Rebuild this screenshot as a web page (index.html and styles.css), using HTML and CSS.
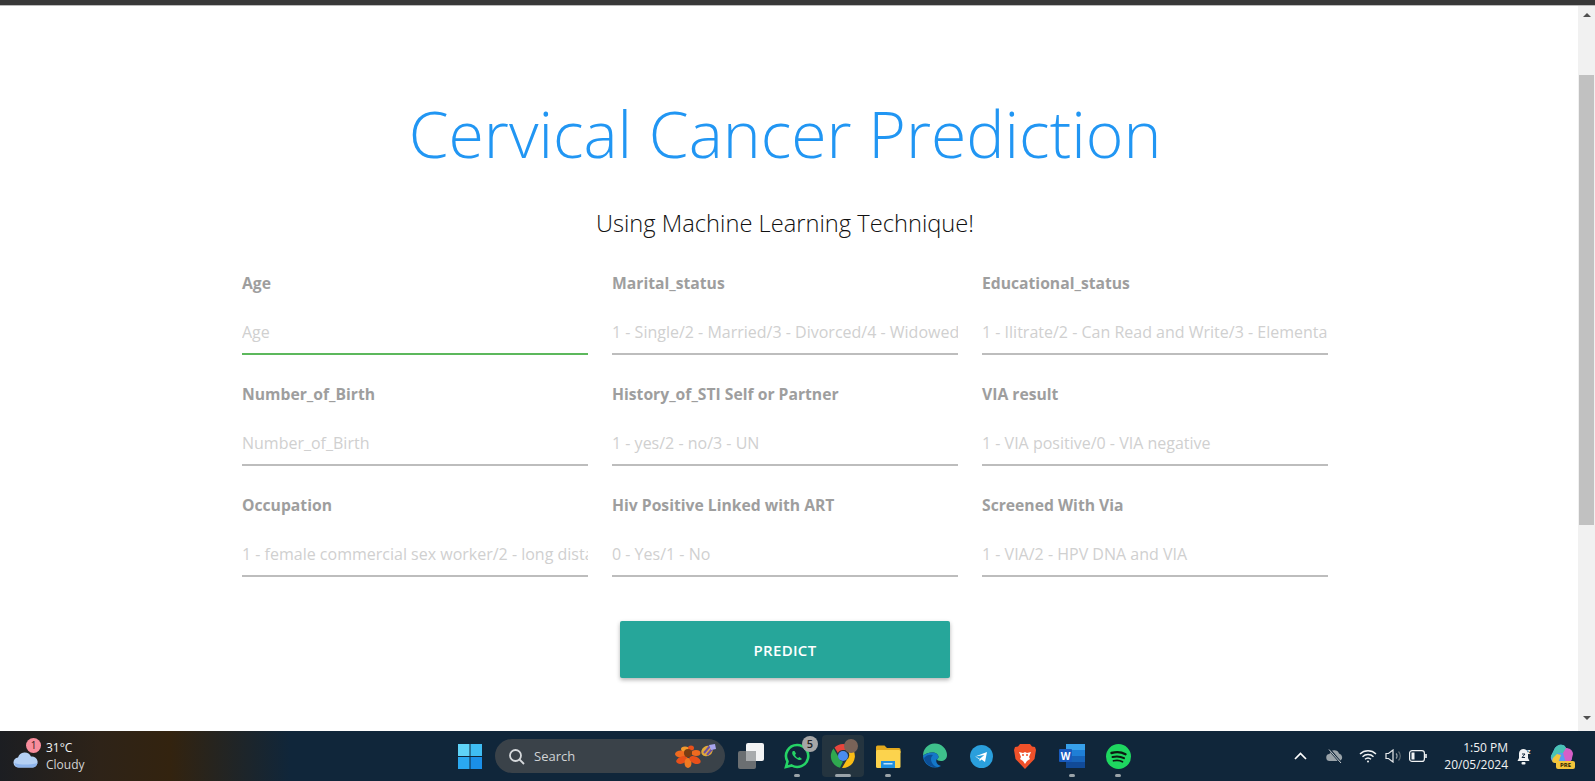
FILE: index.html
```html
<!DOCTYPE html>
<html lang="en">
<head>
  <meta charset="UTF-8">
  <meta name="viewport" content="width=device-width, initial-scale=1.0">
  <title>Cervical Cancer Prediction</title>
  <link rel="stylesheet" href="styles.css">
</head>
<body>
  <div class="topbar"></div>

  <div class="window">
    <main class="page">
      <h1>Cervical Cancer Prediction</h1>
      <h2>Using Machine Learning Technique!</h2>

      <form class="form-grid">
        <div class="field">
          <label for="age">Age</label>
          <input id="age" class="active" type="text" placeholder="Age">
        </div>
        <div class="field">
          <label for="marital">Marital_status</label>
          <input id="marital" type="text" placeholder="1 - Single/2 - Married/3 - Divorced/4 - Widowed">
        </div>
        <div class="field">
          <label for="education">Educational_status</label>
          <input id="education" type="text" placeholder="1 - Ilitrate/2 - Can Read and Write/3 - Elementary">
        </div>
        <div class="field">
          <label for="births">Number_of_Birth</label>
          <input id="births" type="text" placeholder="Number_of_Birth">
        </div>
        <div class="field">
          <label for="sti">History_of_STI Self or Partner</label>
          <input id="sti" type="text" placeholder="1 - yes/2 - no/3 - UN">
        </div>
        <div class="field">
          <label for="via">VIA result</label>
          <input id="via" type="text" placeholder="1 - VIA positive/0 - VIA negative">
        </div>
        <div class="field">
          <label for="occupation">Occupation</label>
          <input id="occupation" type="text" placeholder="1 - female commercial sex worker/2 - long distance driver">
        </div>
        <div class="field">
          <label for="hiv">Hiv Positive Linked with ART</label>
          <input id="hiv" type="text" placeholder="0 - Yes/1 - No">
        </div>
        <div class="field">
          <label for="screened">Screened With Via</label>
          <input id="screened" type="text" placeholder="1 - VIA/2 - HPV DNA and VIA">
        </div>
        <button class="predict" type="button">PREDICT</button>
      </form>
    </main>

    <div class="scrollbar">
      <span class="arrow arrow-up"></span>
      <span class="thumb"></span>
      <span class="arrow arrow-down"></span>
    </div>
  </div>

  <footer class="taskbar">
    <div class="weather">
      <span class="weather-icon">
        <svg width="26" height="18" viewBox="0 0 26 18"><path d="M6 17.500a5 5 0 0 1-1-10 7 7 0 0 1 13-1 5.500 5.500 0 0 1 2 11z" fill="#b4d0f4"/><path d="M1.500 13c6 2 15 2 23 0-.5 2.500-2.500 4.500-5 4.500H6c-2.500 0-4-2-4.500-4.500z" fill="#8db4ec"/></svg>
        <span class="weather-badge">1</span>
      </span>
      <div class="weather-text">
        <div>31°C</div>
        <div class="weather-sub">Cloudy</div>
      </div>
    </div>

    <div class="tasks">
      <svg class="start" width="24" height="25" viewBox="0 0 24 25">
        <rect width="11.500" height="12" fill="#5fd3f7"/><rect x="12.500" width="11.500" height="12" fill="#3fbdf3"/>
        <rect y="13" width="11.500" height="12" fill="#2aa8f0"/><rect x="12.500" y="13" width="11.500" height="12" fill="#1a8fe8"/>
      </svg>

      <div class="search">
        <svg width="17" height="17" viewBox="0 0 17 17" fill="none" stroke="#d6d9dc" stroke-width="1.800"><circle cx="7.500" cy="7.500" r="5.500"/><path d="M11.500 11.500l4.500 4.500"/></svg>
        <span class="search-label">Search</span>
        <svg class="search-art" width="42" height="24" viewBox="0 0 42 24">
          <ellipse cx="6" cy="10" rx="6" ry="3.500" fill="#ef6a1f"/>
          <ellipse cx="7" cy="16" rx="6" ry="3.500" fill="#e8501a" transform="rotate(-20 7 16)"/>
          <ellipse cx="13" cy="19" rx="3.500" ry="5" fill="#f07a22"/>
          <ellipse cx="20" cy="16" rx="6" ry="3.500" fill="#e8501a" transform="rotate(25 20 16)"/>
          <ellipse cx="21" cy="9" rx="4.500" ry="3" fill="#ef6a1f"/>
          <ellipse cx="10" cy="5" rx="4" ry="2.500" fill="#f39a2c"/>
          <ellipse cx="16" cy="4" rx="3" ry="2.500" fill="#e8501a"/>
          <circle cx="13" cy="9" r="4" fill="#7a3d12"/>
          <ellipse cx="32" cy="7" rx="6" ry="5" fill="#e0a93a" transform="rotate(-35 32 7)"/>
          <path d="M29 9l6-7M32 11l6-7" stroke="#6a4fa8" stroke-width="2"/>
          <path d="M34 1l6-1 1 5-5 1z" fill="#a8a4ec"/>
        </svg>
      </div>

      <svg class="taskview" width="26" height="26" viewBox="0 0 26 26">
        <rect y="8" width="18" height="18" rx="2" fill="#6b6f72"/>
        <rect x="8" width="18" height="18" rx="2" fill="#f2f3f4"/>
        <rect x="8" y="8" width="10" height="10" fill="#a8abad"/>
      </svg>

      <div class="app app-whatsapp">
        <svg width="26" height="26" viewBox="0 0 26 26"><path d="M13 2a11 11 0 0 0-9.500 16.500L2 24l5.700-1.500A11 11 0 1 0 13 2z" fill="none" stroke="#25d366" stroke-width="2.600"/><path d="M9 8c-2 2 0 5 2.500 7s5 3 6.500 1l-2.500-2-1.500 1c-1.500-.500-2.500-2-3-3l1-1.500L10.500 8z" fill="#25d366"/></svg>
        <span class="count">5</span>
        <i class="dot"></i>
      </div>

      <div class="app app-chrome">
        <svg width="26" height="26" viewBox="0 0 26 26">
          <path d="M13 1a12 12 0 0 1 10.400 6H13a6 6 0 0 0-5.200 3L4.500 4.500A12 12 0 0 1 13 1z" fill="#e8453c"/>
          <path d="M3.500 5.500L8.500 14a5.500 5.500 0 0 0 4.500 4.500L10 24.700A12 12 0 0 1 3.500 5.500z" fill="#2fa84f"/>
          <path d="M23.800 8A12 12 0 0 1 12 25l5-8.500a5.500 5.500 0 0 0 .500-8.500z" fill="#f9bc15"/>
          <circle cx="13" cy="13" r="5" fill="#4a8cf0"/>
        </svg>
        <span class="chrome-avatar"></span>
        <i class="dot dot-wide"></i>
      </div>

      <div class="app app-files">
        <svg width="26" height="23" viewBox="0 0 26 23"><path d="M1 2a1.500 1.500 0 0 1 1.500-1.500h7L12 3h12a1.500 1.500 0 0 1 1.500 1.500V8H1z" fill="#e3a91d"/><rect x="1" y="5" width="24.500" height="18" rx="1.500" fill="#fcd34d"/><rect x="6" y="16" width="14" height="7" fill="#1f8ee0"/><rect x="8.500" y="18" width="9" height="1.500" fill="#bfe3fb"/></svg>
        <i class="dot"></i>
      </div>

      <div class="app app-edge">
        <svg width="26" height="26" viewBox="0 0 26 26">
          <path d="M1 13A12 12 0 0 1 25 12c0 4-3 6-6 6-3 0-4-1-4-2 2-1 2-3 0-5-4-3-11-1-14 2z" fill="#3ec08c"/>
          <path d="M1 13c3-3 10-5 14-2 2 2 2 4 0 5-2 2 0 6 4 7A12 12 0 0 1 1 13z" fill="#1478c8"/>
          <path d="M9 16c0 3 2 7 6 8-6 1-12-3-13-9 2-3 6-4 9-3-1 1-2 2-2 4z" fill="#0c4f96"/>
        </svg>
      </div>

      <div class="app app-telegram">
        <svg width="23" height="23" viewBox="0 0 23 23"><circle cx="11.500" cy="11.500" r="11.500" fill="#2a9fdc"/><path d="M5 11.500l12-4.500-2 10-3.500-2.500-1.800 1.800-.4-3zl4.300 2.800 5-4.300" fill="#fff"/></svg>
      </div>

      <div class="app app-brave">
        <svg width="22" height="25" viewBox="0 0 22 25"><path d="M6 0h10l2 2.500 3 .500 1 3-1.500 9L11 25 1.500 15 0 6l1-3 3-.500z" fill="#f0512a"/><path d="M5 8l4 1 2-1 2 1 4-1-2 5 1 2-3 2-2 3-2-3-3-2 1-2z" fill="#fff"/><path d="M8 11h2M12 11h2" stroke="#f0512a" stroke-width="1.500"/></svg>
      </div>

      <div class="app app-word">
        <svg width="26" height="24" viewBox="0 0 26 24">
          <rect x="7" width="19" height="6.500" fill="#37a0ea"/><rect x="7" y="6" width="19" height="6" fill="#1f7fd6"/><rect x="7" y="12" width="19" height="6" fill="#1763b8"/><rect x="7" y="18" width="19" height="6" fill="#114a97"/>
          <rect y="5" width="13" height="13" rx="1" fill="#185abd"/>
          <text x="6.500" y="15.500" class="word-letter">W</text>
        </svg>
        <i class="dot"></i>
      </div>

      <div class="app app-spotify">
        <svg width="25" height="25" viewBox="0 0 25 25" fill="none" stroke="#0d1a12" stroke-linecap="round"><circle cx="12.500" cy="12.500" r="12.500" fill="#1ed760" stroke="none"/><path d="M5.500 9c5-1.500 10-1 14 1.200" stroke-width="2.400"/><path d="M6.500 13c4-1 8-.700 11.500 1.200" stroke-width="2"/><path d="M7.500 16.800c3.200-.800 6.500-.500 9 1" stroke-width="1.700"/></svg>
        <i class="dot"></i>
      </div>
    </div>

    <div class="tray">
      <svg class="tray-chevron" width="13" height="8" viewBox="0 0 13 8" fill="none" stroke="#fff" stroke-width="1.700"><path d="M1 7l5.500-5.500L12 7"/></svg>
      <svg class="tray-cloud" width="18" height="14" viewBox="0 0 18 14"><path d="M4 12a3.500 3.500 0 0 1-.500-7 5 5 0 0 1 9.500-.500A4 4 0 0 1 14 12z" fill="#9aa3a9"/><path d="M3 0l12 14" stroke="#10263a" stroke-width="2.500"/><path d="M3 .500l12 13.500" stroke="#c9ced1" stroke-width="1"/></svg>
      <svg class="tray-wifi" width="18" height="14" viewBox="0 0 18 14" fill="none" stroke="#f1f3f4" stroke-width="1.400"><path d="M1 5a11.500 11.500 0 0 1 16 0M3.500 7.700a8 8 0 0 1 11 0M6 10.300a4.500 4.500 0 0 1 6 0"/><circle cx="9" cy="12.500" r="1" fill="#f1f3f4" stroke="none"/></svg>
      <svg class="tray-volume" width="18" height="14" viewBox="0 0 18 14" fill="none" stroke="#e6e8ea" stroke-width="1.200"><path d="M1 4.500h2.500L8 1v12L3.500 9.500H1z"/><path d="M11 4.500a3.500 3.500 0 0 1 0 5" stroke="#9aa3a9"/><path d="M13.500 2.500a6.500 6.500 0 0 1 0 9" stroke="#5e6a72"/></svg>
      <svg class="tray-battery" width="18" height="12" viewBox="0 0 18 12" fill="none" stroke="#f1f3f4" stroke-width="1.200"><rect x=".600" y=".600" width="14.800" height="10.800" rx="2.500"/><rect x="2.500" y="2.500" width="3" height="7" fill="#f1f3f4" stroke="none"/><path d="M17 4v4" stroke-width="1.600"/></svg>
      <div class="clock">
        <div>1:50 PM</div>
        <div>20/05/2024</div>
      </div>
      <svg class="tray-bell" width="15" height="17" viewBox="0 0 15 17"><path d="M6.500 1a4.500 4.500 0 0 0-4.500 4.500V10L.500 13h12L11 10V5.500A4.500 4.500 0 0 0 6.500 1z" fill="#f1f3f4"/><rect x="4.500" y="14" width="4" height="2.500" rx="1" fill="#f1f3f4"/><path d="M5 6h3L5 9.500h3" stroke="#10263a" fill="none"/><text x="10" y="6" class="bell-z">z</text></svg>
      <div class="copilot">
        <svg width="25" height="20" viewBox="0 0 25 20"><path d="M9 1c3-1 6 0 7 3l5 8c2 4-1 7-5 7H7c-4 0-7-3-6-7l3-6c1-3 3-4 5-5z" fill="#5a9df0"/><path d="M9 1c3-1 6 0 7 3l2 5H8L5 14c-2 1-4 0-4-2l3-6c1-3 3-4 5-5z" fill="#49c2b4"/><path d="M16 4c3 0 7 2 7 6l-1 4c0 3-3 5-6 5l-3-10z" fill="#d65fc8"/><path d="M4 13l3-3 4 1-3 8H5c-3 0-4-3-1-6z" fill="#f3c53b"/></svg>
        <span class="copilot-tag">PRE</span>
      </div>
    </div>
  </footer>
</body>
</html>
```
FILE: styles.css
```css
html, body {
  margin: 0;
  height: 100%;
  overflow: hidden;
}
body {
  display: flex;
  flex-direction: column;
  height: 781px;
  font-family: "Open Sans", sans-serif;
  background-color: #fff;
}
.topbar {
  height: 5px;
  background-color: #383838;
  border-bottom: 1px solid #bbb;
  flex: none;
}
.window {
  display: flex;
  flex: 1;
  min-height: 0;
}
.page {
  flex: 1;
  padding: 87px 0 0 242px;
}
h1 {
  width: 1086px;
  margin: 0;
  font-size: 64.300px;
  font-weight: 300;
  line-height: 80px;
  text-align: center;
  color: #2196f3;
}
h2 {
  width: 1086px;
  margin: 34px 0 33px;
  font-size: 23.700px;
  font-weight: 300;
  line-height: 32px;
  text-align: center;
  color: #111;
}
.form-grid {
  display: grid;
  grid-template-columns: repeat(3, 346px);
  column-gap: 24px;
  row-gap: 28px;
  width: 1086px;
}
.field label {
  display: block;
  height: 22px;
  margin-bottom: 16px;
  font-size: 15.700px;
  font-weight: 700;
  line-height: 22px;
  color: #9e9e9e;
}
.field input {
  display: block;
  box-sizing: border-box;
  width: 100%;
  height: 45px;
  padding: 0;
  border: 0;
  border-bottom: 2px solid #bdbdbd;
  outline: none;
  font-family: inherit;
  font-size: 16px;
  background: transparent;
}
.field input::placeholder {
  color: #d0d0d0;
}
.field input.active {
  border-bottom-color: #5cb85c;
}
.predict {
  grid-column: 1 / -1;
  justify-self: center;
  width: 330px;
  height: 57px;
  margin-top: 16px;
  border: 0;
  border-radius: 2px;
  font-family: inherit;
  font-size: 15px;
  font-weight: 600;
  letter-spacing: .3px;
  color: #fff;
  background-color: #26a69a;
  box-shadow: 0 2px 4px rgba(0,0,0,.3);
}
.scrollbar {
  display: flex;
  flex-direction: column;
  align-items: center;
  flex: none;
  width: 17px;
  background-color: #f1f1f1;
}
.arrow {
  width: 0;
  height: 0;
  border-left: 4px solid transparent;
  border-right: 4px solid transparent;
}
.arrow-up {
  margin-top: 7px;
  border-bottom: 4px solid #505050;
}
.arrow-down {
  margin-top: 191px;
  border-top: 4px solid #505050;
}
.thumb {
  width: 15px;
  height: 450px;
  margin-top: 58px;
  background-color: #c1c1c1;
}

/* taskbar */
.taskbar {
  display: flex;
  align-items: center;
  flex: none;
  height: 50px;
  color: #f1f3f4;
  background: linear-gradient(90deg, #1c1e22 0, #2e2318 100px, #33230f 170px, #10263a 290px, #10263a 100%);
}
.weather {
  display: flex;
  align-items: center;
  width: 458px;
  padding-left: 13px;
  box-sizing: border-box;
  flex: none;
}
.weather-icon {
  position: relative;
  display: block;
  width: 26px;
  height: 18px;
  margin-top: 6px;
}
.weather-badge {
  position: absolute;
  top: -12px;
  left: 13px;
  width: 15px;
  height: 15px;
  border-radius: 50%;
  font-size: 10px;
  line-height: 15px;
  text-align: center;
  color: #3a1c22;
  background-color: #f98d9c;
}
.weather-text {
  margin-left: 7px;
  font-size: 12px;
  line-height: 17px;
}
.weather-sub {
  color: #d4d4d4;
}
.tasks {
  display: flex;
  align-items: center;
  flex: none;
  height: 50px;
}
.start {
  margin-right: 13px;
}
.search {
  display: flex;
  align-items: center;
  box-sizing: border-box;
  width: 230px;
  height: 34px;
  padding: 0 8px 0 13px;
  border-radius: 17px;
  background-color: #3a4249;
}
.search-label {
  flex: 1;
  margin-left: 9px;
  font-size: 13px;
  color: #d0d3d5;
}
.taskview {
  margin-left: 13px;
}
.app {
  position: relative;
  display: flex;
  align-items: center;
  justify-content: center;
  width: 26px;
  height: 42px;
}
.dot {
  position: absolute;
  bottom: 0;
  left: 50%;
  width: 6px;
  height: 3px;
  margin-left: -3px;
  border-radius: 2px;
  background-color: #9aa3a9;
}
.dot-wide {
  width: 16px;
  margin-left: -8px;
}
.app-whatsapp {
  margin-left: 20px;
}
.count {
  position: absolute;
  top: 1px;
  right: -8px;
  width: 16px;
  height: 16px;
  border-radius: 50%;
  font-size: 11px;
  font-weight: 600;
  line-height: 16px;
  text-align: center;
  color: #222;
  background-color: #a6a6a6;
}
.app-chrome {
  width: 42px;
  margin-left: 12px;
  border-radius: 4px;
  background-color: #24343f;
}
.chrome-avatar {
  position: absolute;
  top: 4px;
  right: 6px;
  width: 14px;
  height: 14px;
  border-radius: 50%;
  background-color: #7a6358;
}
.app-files {
  margin-left: 11px;
}
.app-edge {
  margin-left: 21px;
}
.app-telegram {
  margin-left: 20px;
}
.app-brave {
  margin-left: 18px;
}
.app-word {
  margin-left: 21px;
}
.app-spotify {
  margin-left: 20px;
}
.word-letter {
  font-size: 10px;
  font-weight: 700;
  text-anchor: middle;
  fill: #fff;
}
.tray {
  display: flex;
  align-items: center;
  flex: none;
  margin-left: 163px;
}
.tray-cloud {
  margin-left: 19px;
}
.tray-wifi {
  margin-left: 15px;
}
.tray-volume {
  margin-left: 8px;
}
.tray-battery {
  margin-left: 6px;
}
.clock {
  width: 76px;
  margin-left: 5px;
  font-size: 12px;
  line-height: 17px;
  text-align: right;
}
.tray-bell {
  margin-left: 9px;
}
.bell-z {
  font-size: 7px;
  font-weight: 700;
  fill: #f1f3f4;
}
.copilot {
  position: relative;
  width: 25px;
  height: 24px;
  margin-left: 18px;
}
.copilot-tag {
  position: absolute;
  right: 0;
  bottom: -1px;
  width: 19px;
  height: 8px;
  border-radius: 2px;
  font-size: 6px;
  font-weight: 700;
  line-height: 8px;
  text-align: center;
  color: #2a2000;
  background-color: #f3c53b;
}
```
